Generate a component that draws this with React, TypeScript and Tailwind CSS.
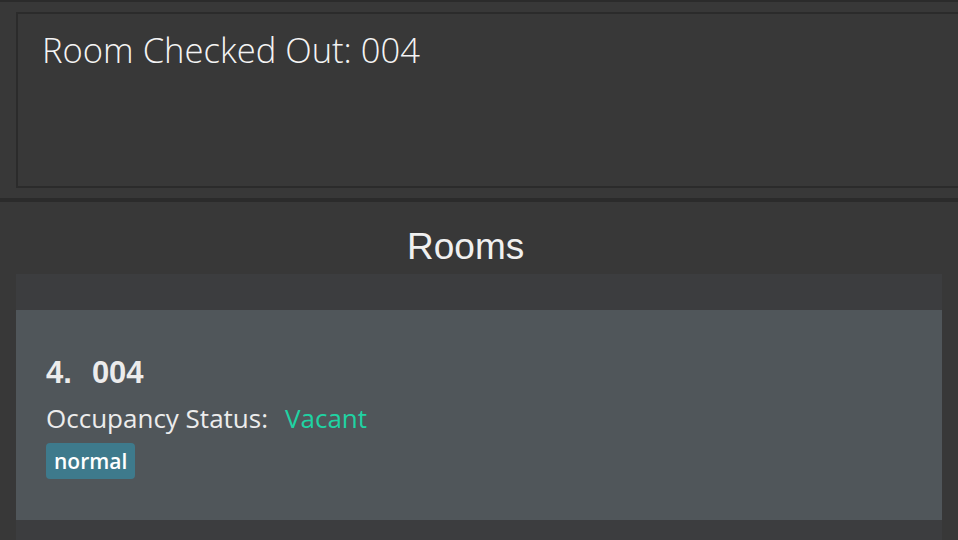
import React from 'react';

const ROOMS = [{ index: 4, number: '004', status: 'Vacant', tags: ['normal'] }];

export default function App() {
  return (
    <div className="w-[958px] h-[540px] overflow-hidden bg-[#383838] border-t-2 border-[#2b2b2b] flex flex-col">
      <div className="pl-4 pt-[10px] pb-[10px]">
        <div className="h-[176px] border-2 border-r-0 border-[#2b2b2b] pl-[24px] pt-[16px]">
          <p className="text-[#f4f4f4] text-[34.6px] font-light leading-[40px] font-['Open_Sans',sans-serif]">
            Room Checked Out: 004
          </p>
        </div>
      </div>
      <div className="h-[4px] bg-[#2b2b2b]" />
      <div className="h-[72px] flex items-center pl-[407px] pt-[16px]">
        <h2 className="text-[37px] leading-none text-[#f0f0f0] font-['Liberation_Sans',Arial,sans-serif]">Rooms</h2>
      </div>
      <div className="flex-1 ml-4 mr-4 bg-[#3c3d3f] pt-[36px]">
        {ROOMS.map((room) => (
          <div key={room.index} className="h-[210px] bg-[#50565a] pl-[30px] pt-[46px]">
            <div className="flex text-[31px] font-bold leading-[34px] text-[#ececec] font-['Liberation_Sans',Arial,sans-serif]">
              <span>{room.index}.</span>
              <span className="ml-[20px]">{room.number}</span>
            </div>
            <div className="flex mt-[12px] text-[26px] leading-[32px] text-[#ececec] font-['Open_Sans',sans-serif]">
              <span>Occupancy Status:</span>
              <span className="ml-[17px] text-[#1fd3a3]">{room.status}</span>
            </div>
            <div className="flex gap-2 mt-[9px]">
              {room.tags.map((t) => (
                <span
                  key={t}
                  className="h-[36px] px-[8px] rounded-[4px] bg-[#3e7a8c] text-white text-[21px] font-semibold leading-[36px] font-['Open_Sans',sans-serif]"
                >
                  {t}
                </span>
              ))}
            </div>
          </div>
        ))}
      </div>
    </div>
  );
}
